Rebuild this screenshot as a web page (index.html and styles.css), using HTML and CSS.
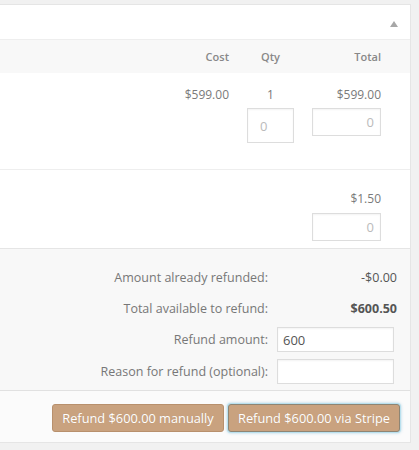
FILE: index.html
```html
<!DOCTYPE html>
<html>
<head>
<meta charset="utf-8">
<link rel="stylesheet" href="styles.css">
</head>
<body>
<div class="panel">
  <div class="panel-head">
    <svg class="toggle" width="8" height="6" viewBox="0 0 8 6"><polygon points="4,0 8,6 0,6" fill="#a7a7a7"/></svg>
  </div>
  <div class="items-head">
    <span></span>
    <span class="th right">Cost</span>
    <span class="th center">Qty</span>
    <span class="th right">Total</span>
  </div>
  <div class="item-row">
    <span></span>
    <span class="cell right">$599.00</span>
    <span class="cell center">1</span>
    <span class="cell right">$599.00</span>
    <span></span>
    <span></span>
    <input class="qty-input" type="text" placeholder="0">
    <input class="amt-input" type="text" placeholder="0">
  </div>
  <div class="ship-row">
    <span></span>
    <span></span>
    <span></span>
    <span class="cell right">$1.50</span>
    <span></span>
    <span></span>
    <span></span>
    <input class="amt-input" type="text" placeholder="0">
  </div>
  <div class="refund">
    <span class="label">Amount already refunded:</span>
    <span class="value">-$0.00</span>
    <span class="label">Total available to refund:</span>
    <span class="value strong">$600.50</span>
    <span class="label">Refund amount:</span>
    <input class="refund-input" type="text" value="600">
    <span class="label">Reason for refund (optional):</span>
    <input class="refund-input" type="text">
  </div>
  <div class="actions">
    <button class="btn">Refund $600.00 manually</button>
    <button class="btn focus">Refund $600.00 via Stripe</button>
  </div>
</div>
</body>
</html>
```
FILE: styles.css
```css
html, body {
  margin: 0;
  padding: 0;
  background: #f1f1f1;
  font-family: "Open Sans", "Liberation Sans", sans-serif;
  color: #777;
}
.panel {
  margin-top: 4px;
  width: 410px;
  background: #fff;
  border-top: 1px solid #e5e5e5;
  border-right: 1px solid #e5e5e5;
  border-bottom: 1px solid #e5e5e5;
}
.panel-head {
  height: 34px;
  border-bottom: 1px solid #eee;
  display: flex;
  justify-content: flex-end;
  align-items: flex-start;
  padding-right: 12px;
}
.toggle {
  margin-top: 16px;
}
.items-head,
.item-row,
.ship-row {
  display: grid;
  grid-template-columns: 1fr 80px 47px 69px;
  column-gap: 18px;
  padding-right: 29px;
  font-size: 12px;
  line-height: 18px;
}
.items-head {
  height: 33px;
  align-items: center;
  background: #f8f8f8;
}
.th {
  color: #888;
  font-weight: 600;
  font-size: 11px;
}
.right { text-align: right; }
.center { text-align: center; }
.cell { color: #7a7a7a; }
.item-row {
  padding-top: 13px;
  padding-bottom: 26px;
  row-gap: 4px;
  align-items: start;
  border-bottom: 1px solid #eee;
}
.ship-row {
  padding-top: 20px;
  padding-bottom: 7px;
  row-gap: 5px;
  align-items: start;
  border-bottom: 1px solid #e5e5e5;
}
input {
  font-family: "Open Sans", "Liberation Sans", sans-serif;
  font-size: 13px;
  color: #555;
  border: 1px solid #ddd;
  background: #fff;
  box-shadow: inset 0 1px 2px rgba(0,0,0,.05);
  box-sizing: border-box;
  margin: 0;
  outline: none;
}
input::placeholder { color: #bbb; }
.qty-input {
  width: 47px;
  height: 35px;
  padding: 0 0 0 12px;
}
.amt-input {
  width: 69px;
  height: 28px;
  padding: 0 6px 0 0;
  text-align: right;
}
.refund {
  background: #f8f8f8;
  display: grid;
  grid-template-columns: 1fr 120px;
  grid-template-rows: 24px 24px 25px 24px;
  column-gap: 9px;
  row-gap: 7px;
  align-items: center;
  padding: 16px 13px 7px 0;
  border-bottom: 1px solid #e1e1e1;
  font-size: 12.5px;
}
.label {
  text-align: right;
  color: #777;
}
.value {
  text-align: right;
  color: #555;
}
.value.strong {
  font-weight: 700;
  color: #555;
}
.refund-input {
  width: 117px;
  height: 25px;
  padding: 0 5px;
}
.actions {
  background: #fbfbfb;
  display: flex;
  justify-content: flex-end;
  gap: 4px;
  padding: 13px 10px 10px 0;
}
.btn {
  width: 172px;
  height: 28px;
  box-sizing: border-box;
  background: #c9a27f;
  border: 1px solid #b8906d;
  border-radius: 3px;
  color: #fff;
  font-family: "Open Sans", "Liberation Sans", sans-serif;
  font-size: 12.8px;
  padding: 0;
  text-shadow: 0 0 1px rgba(0,0,0,.1);
}
.btn.focus {
  border-color: #8e8574;
  box-shadow: 0 0 0 1px #b9e0ee, 0 0 3px 1px rgba(30,140,190,.35);
}
```
